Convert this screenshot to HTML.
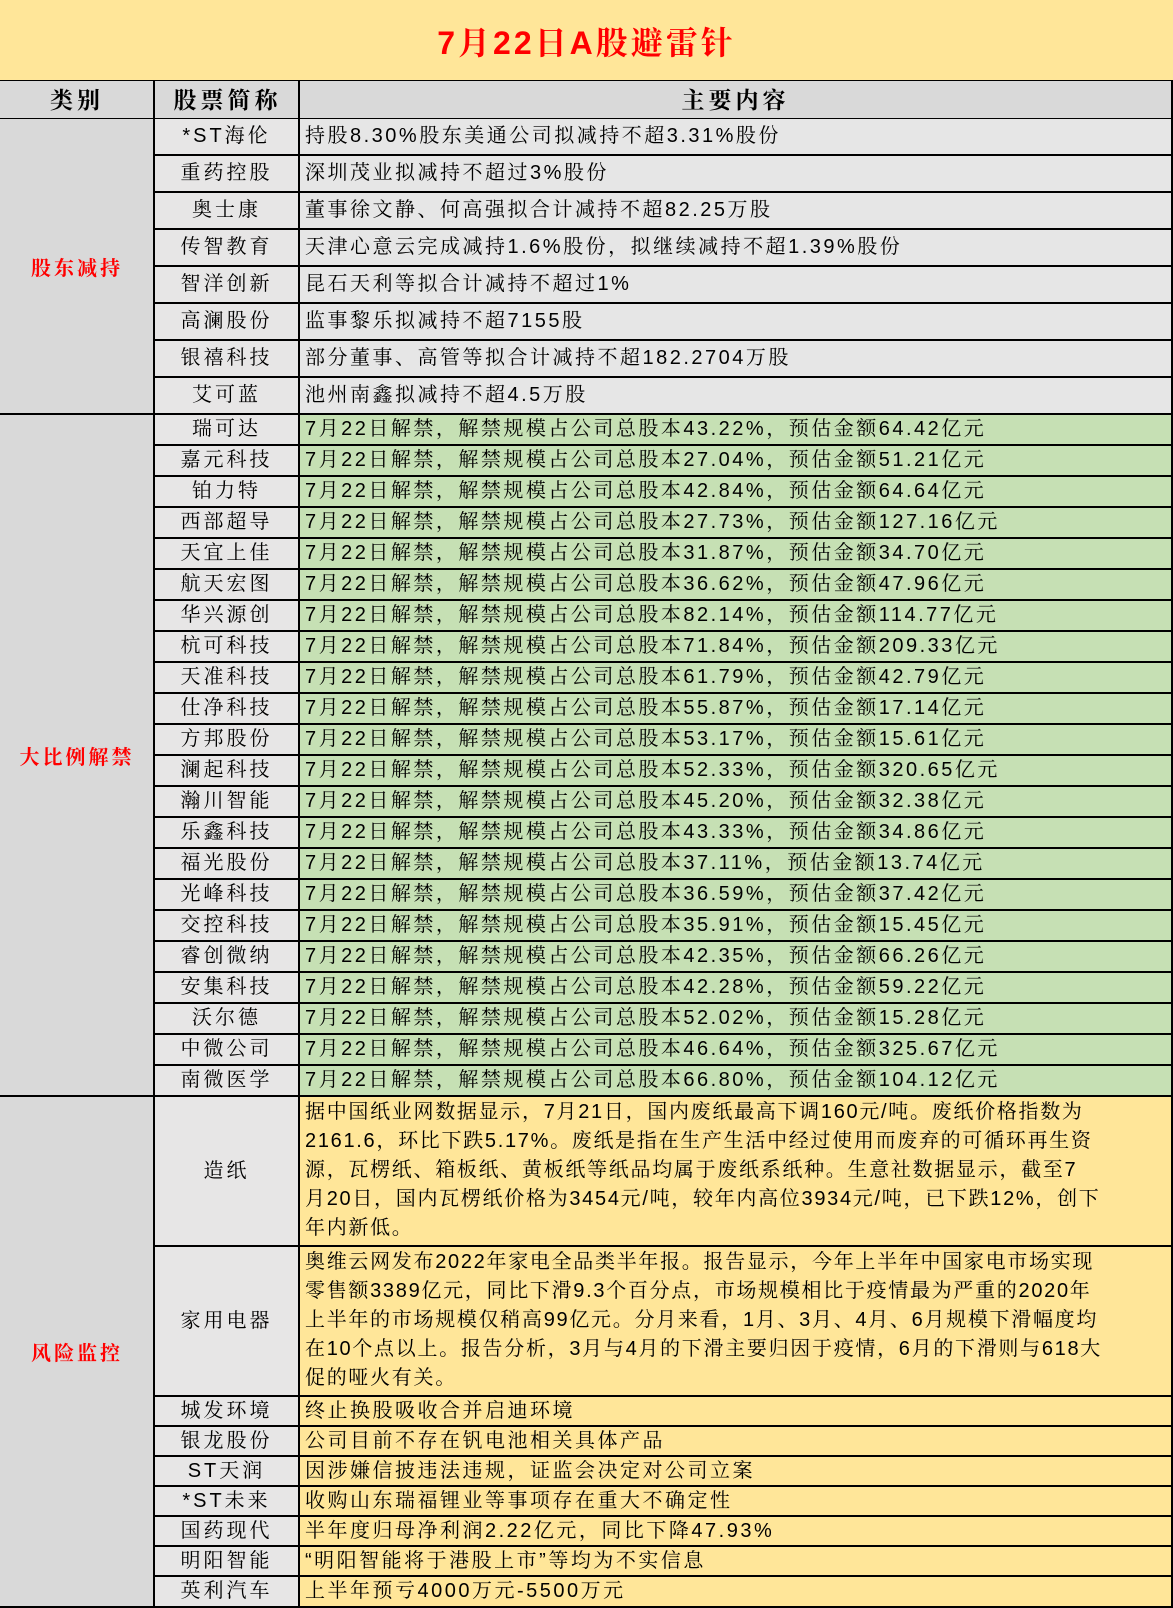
<!DOCTYPE html>
<html><head><meta charset="utf-8"><style>
*{margin:0;padding:0;box-sizing:border-box}
body{width:1173px;height:1608px;background:#FFE699;position:relative;overflow:hidden;font-family:"Liberation Sans","Noto Serif CJK SC","Noto Sans CJK SC",serif;color:#000}
.title{position:absolute;left:0;top:0;width:1173px;height:82px;background:#FFE699;border-bottom:2px solid #000;text-align:center;line-height:86px;color:#f00;font-weight:bold;font-size:32px;letter-spacing:3px}
.hd{position:absolute;top:81px;height:39px;background:#D9D9D9;border-bottom:2px solid #000;font-weight:bold;font-size:23px;text-align:center;line-height:38px;letter-spacing:4px}
.cat{position:absolute;left:0;width:154px;background:#D9D9D9;border-bottom:2px solid #000;color:#f00;font-weight:bold;font-size:20px;letter-spacing:3px;display:flex;align-items:center;justify-content:center}
.row{position:absolute;left:153px;width:1020px;display:flex;border-bottom:2px solid #000}
.n{width:145px;border-left:2px solid #000;background:#E7E6E6;text-align:center;font-size:20px;letter-spacing:3px;white-space:nowrap}
.t{width:875px;border-left:2px solid #000;border-right:2px solid #000;padding-left:5px;font-size:20px;letter-spacing:2.5px;white-space:nowrap}
.g .t{background:#C6E0B4}
.gy .t{background:#E6E6E6}
.y .t{background:#FFE699}
.p{line-height:29px;letter-spacing:1.7px;padding-top:1px}
.a{height:37px;line-height:35px}
.b{height:31px;line-height:29px}
.c{height:30px;line-height:28px}
</style></head><body>
<div class="title">7月22日A股避雷针</div>
<div class="hd" style="left:0;width:154px">类别</div>
<div class="hd" style="left:153px;width:147px;border-left:2px solid #000">股票简称</div>
<div class="hd" style="left:298px;width:875px;border-left:2px solid #000;border-right:2px solid #000">主要内容</div>

<div class="cat" style="top:119px;height:296px">股东减持</div>
<div class="cat" style="top:415px;height:682px">大比例解禁</div>
<div class="cat" style="top:1097px;height:511px">风险监控</div>

<div class="row gy a" style="top:119px"><div class="n">*ST海伦</div><div class="t">持股8.30%股东美通公司拟减持不超3.31%股份</div></div>
<div class="row gy a" style="top:156px"><div class="n">重药控股</div><div class="t">深圳茂业拟减持不超过3%股份</div></div>
<div class="row gy a" style="top:193px"><div class="n">奥士康</div><div class="t">董事徐文静、何高强拟合计减持不超82.25万股</div></div>
<div class="row gy a" style="top:230px"><div class="n">传智教育</div><div class="t">天津心意云完成减持1.6%股份，拟继续减持不超1.39%股份</div></div>
<div class="row gy a" style="top:267px"><div class="n">智洋创新</div><div class="t">昆石天利等拟合计减持不超过1%</div></div>
<div class="row gy a" style="top:304px"><div class="n">高澜股份</div><div class="t">监事黎乐拟减持不超7155股</div></div>
<div class="row gy a" style="top:341px"><div class="n">银禧科技</div><div class="t">部分董事、高管等拟合计减持不超182.2704万股</div></div>
<div class="row gy a" style="top:378px"><div class="n">艾可蓝</div><div class="t">池州南鑫拟减持不超4.5万股</div></div>

<div class="row g b" style="top:415px"><div class="n">瑞可达</div><div class="t">7月22日解禁，解禁规模占公司总股本43.22%，预估金额64.42亿元</div></div>
<div class="row g b" style="top:446px"><div class="n">嘉元科技</div><div class="t">7月22日解禁，解禁规模占公司总股本27.04%，预估金额51.21亿元</div></div>
<div class="row g b" style="top:477px"><div class="n">铂力特</div><div class="t">7月22日解禁，解禁规模占公司总股本42.84%，预估金额64.64亿元</div></div>
<div class="row g b" style="top:508px"><div class="n">西部超导</div><div class="t">7月22日解禁，解禁规模占公司总股本27.73%，预估金额127.16亿元</div></div>
<div class="row g b" style="top:539px"><div class="n">天宜上佳</div><div class="t">7月22日解禁，解禁规模占公司总股本31.87%，预估金额34.70亿元</div></div>
<div class="row g b" style="top:570px"><div class="n">航天宏图</div><div class="t">7月22日解禁，解禁规模占公司总股本36.62%，预估金额47.96亿元</div></div>
<div class="row g b" style="top:601px"><div class="n">华兴源创</div><div class="t">7月22日解禁，解禁规模占公司总股本82.14%，预估金额114.77亿元</div></div>
<div class="row g b" style="top:632px"><div class="n">杭可科技</div><div class="t">7月22日解禁，解禁规模占公司总股本71.84%，预估金额209.33亿元</div></div>
<div class="row g b" style="top:663px"><div class="n">天准科技</div><div class="t">7月22日解禁，解禁规模占公司总股本61.79%，预估金额42.79亿元</div></div>
<div class="row g b" style="top:694px"><div class="n">仕净科技</div><div class="t">7月22日解禁，解禁规模占公司总股本55.87%，预估金额17.14亿元</div></div>
<div class="row g b" style="top:725px"><div class="n">方邦股份</div><div class="t">7月22日解禁，解禁规模占公司总股本53.17%，预估金额15.61亿元</div></div>
<div class="row g b" style="top:756px"><div class="n">澜起科技</div><div class="t">7月22日解禁，解禁规模占公司总股本52.33%，预估金额320.65亿元</div></div>
<div class="row g b" style="top:787px"><div class="n">瀚川智能</div><div class="t">7月22日解禁，解禁规模占公司总股本45.20%，预估金额32.38亿元</div></div>
<div class="row g b" style="top:818px"><div class="n">乐鑫科技</div><div class="t">7月22日解禁，解禁规模占公司总股本43.33%，预估金额34.86亿元</div></div>
<div class="row g b" style="top:849px"><div class="n">福光股份</div><div class="t">7月22日解禁，解禁规模占公司总股本37.11%，预估金额13.74亿元</div></div>
<div class="row g b" style="top:880px"><div class="n">光峰科技</div><div class="t">7月22日解禁，解禁规模占公司总股本36.59%，预估金额37.42亿元</div></div>
<div class="row g b" style="top:911px"><div class="n">交控科技</div><div class="t">7月22日解禁，解禁规模占公司总股本35.91%，预估金额15.45亿元</div></div>
<div class="row g b" style="top:942px"><div class="n">睿创微纳</div><div class="t">7月22日解禁，解禁规模占公司总股本42.35%，预估金额66.26亿元</div></div>
<div class="row g b" style="top:973px"><div class="n">安集科技</div><div class="t">7月22日解禁，解禁规模占公司总股本42.28%，预估金额59.22亿元</div></div>
<div class="row g b" style="top:1004px"><div class="n">沃尔德</div><div class="t">7月22日解禁，解禁规模占公司总股本52.02%，预估金额15.28亿元</div></div>
<div class="row g b" style="top:1035px"><div class="n">中微公司</div><div class="t">7月22日解禁，解禁规模占公司总股本46.64%，预估金额325.67亿元</div></div>
<div class="row g b" style="top:1066px"><div class="n">南微医学</div><div class="t">7月22日解禁，解禁规模占公司总股本66.80%，预估金额104.12亿元</div></div>

<div class="row y" style="top:1097px;height:150px"><div class="n" style="line-height:148px">造纸</div><div class="t p">据中国纸业网数据显示，7月21日，国内废纸最高下调160元/吨。废纸价格指数为<br>2161.6，环比下跌5.17%。废纸是指在生产生活中经过使用而废弃的可循环再生资<br>源，瓦楞纸、箱板纸、黄板纸等纸品均属于废纸系纸种。生意社数据显示，截至7<br>月20日，国内瓦楞纸价格为3454元/吨，较年内高位3934元/吨，已下跌12%，创下<br>年内新低。</div></div>
<div class="row y" style="top:1247px;height:150px"><div class="n" style="line-height:148px">家用电器</div><div class="t p">奥维云网发布2022年家电全品类半年报。报告显示，今年上半年中国家电市场实现<br>零售额3389亿元，同比下滑9.3个百分点，市场规模相比于疫情最为严重的2020年<br>上半年的市场规模仅稍高99亿元。分月来看，1月、3月、4月、6月规模下滑幅度均<br>在10个点以上。报告分析，3月与4月的下滑主要归因于疫情，6月的下滑则与618大<br>促的哑火有关。</div></div>
<div class="row y c" style="top:1397px"><div class="n">城发环境</div><div class="t">终止换股吸收合并启迪环境</div></div>
<div class="row y c" style="top:1427px"><div class="n">银龙股份</div><div class="t">公司目前不存在钒电池相关具体产品</div></div>
<div class="row y c" style="top:1457px"><div class="n">ST天润</div><div class="t">因涉嫌信披违法违规，证监会决定对公司立案</div></div>
<div class="row y c" style="top:1487px"><div class="n">*ST未来</div><div class="t">收购山东瑞福锂业等事项存在重大不确定性</div></div>
<div class="row y c" style="top:1517px"><div class="n">国药现代</div><div class="t">半年度归母净利润2.22亿元，同比下降47.93%</div></div>
<div class="row y c" style="top:1547px"><div class="n">明阳智能</div><div class="t">“明阳智能将于港股上市”等均为不实信息</div></div>
<div class="row y c" style="top:1577px;height:31px"><div class="n">英利汽车</div><div class="t">上半年预亏4000万元-5500万元</div></div>
</body></html>
